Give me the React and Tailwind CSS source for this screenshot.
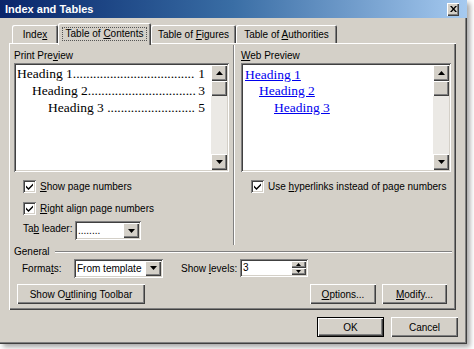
import React from 'react';

const raised =
  'bg-[#d4d0c8] shadow-[inset_1px_1px_#ffffff,inset_-1px_-1px_#404040,inset_-2px_-2px_#808080]';
const sunken =
  'shadow-[inset_1px_1px_#808080,inset_-1px_-1px_#ffffff,inset_2px_2px_#404040,inset_-2px_-2px_#d4d0c8]';
const tab =
  'flex h-[18px] items-center justify-center rounded-t-[2px] shadow-[inset_1px_1px_#ffffff,inset_-1px_0_#404040,inset_-2px_0_#808080]';

function Arrow({ up }) {
  return (
    <svg width="7" height="4" viewBox="0 0 7 4">
      <path d={up ? 'M3.5 0L7 4H0z' : 'M0 0h7L3.5 4z'} fill="#000" />
    </svg>
  );
}

function Scrollbar() {
  return (
    <div className="flex w-[16px] flex-col bg-[#ebe9e5]">
      <div className={`flex h-[16px] items-center justify-center ${raised}`}>
        <Arrow up />
      </div>
      <div className={`h-[15px] ${raised}`} />
      <div className="flex-1" />
      <div className={`flex h-[16px] items-center justify-center ${raised}`}>
        <Arrow />
      </div>
    </div>
  );
}

function Check({ children }) {
  return (
    <div className="flex h-[14px] items-center gap-[4px]">
      <div className={`flex h-[13px] w-[13px] items-center justify-center bg-white ${sunken}`}>
        <svg width="7" height="7" viewBox="0 0 7 7">
          <path d="M0 2.5l2.5 2.5L7 0.5v2L2.5 7 0 4.5z" fill="#000" />
        </svg>
      </div>
      <span className="whitespace-nowrap">{children}</span>
    </div>
  );
}

function Dropdown({ width, value }) {
  return (
    <div className={`flex h-[19px] bg-white p-[2px] ${sunken} ${width}`}>
      <div className="flex-1 whitespace-nowrap pl-[1px] leading-[15px] text-black">{value}</div>
      <div className={`flex w-[16px] items-center justify-center ${raised}`}>
        <Arrow />
      </div>
    </div>
  );
}

function Button({ width, children, bold }) {
  return (
    <div
      className={`flex h-[20px] items-center justify-center ${width} ${
        bold
          ? 'bg-[#d4d0c8] shadow-[inset_1px_1px_#000,inset_-1px_-1px_#000,inset_2px_2px_#ffffff,inset_-2px_-2px_#404040,inset_-3px_-3px_#808080]'
          : raised
      }`}
    >
      <span className="whitespace-nowrap">{children}</span>
    </div>
  );
}

// línea del índice con puntos de relleno
function TocLine({ indent, text, dots, page }) {
  return (
    <div className={`flex h-[17px] items-end justify-between pr-[6px] ${indent}`}>
      <span className="whitespace-nowrap">
        {text}
        {'.'.repeat(dots)}
      </span>
      <span>{page}</span>
    </div>
  );
}

export default function App() {
  return (
    <div className="h-[349px] w-[474px] overflow-hidden bg-white font-['Liberation_Sans',Arial,sans-serif] text-[10px] text-black">
      <div className="flex h-[344px] w-[467px] flex-col bg-[#d4d0c8] shadow-[inset_-1px_-1px_#404040,inset_-2px_-2px_#808080,3px_3px_5px_rgba(0,0,0,0.35)]">
        {/* barra de título */}
        <div className="flex h-[18px] items-center justify-between bg-gradient-to-r from-[#0a246a] via-[#3a6ea5] to-[#a6caf0] pl-[5px] pr-[8px]">
          <span className="text-[11px] font-bold text-white">Index and Tables</span>
          <div className={`flex h-[13px] w-[12px] items-center justify-center ${raised}`}>
            <svg width="7" height="6" viewBox="0 0 7 6">
              <path d="M0 0h1.8L3.5 2 5.2 0H7L4.4 3 7 6H5.2L3.5 4 1.8 6H0l2.6-3z" fill="#000" />
            </svg>
          </div>
        </div>

        <div className="flex flex-col px-[9px]">
          {/* pestañas */}
          <div className="flex h-[25px] items-end pl-[3px]">
            <div className={`${tab} w-[46px]`}>
              <span>
                Inde<u>x</u>
              </span>
            </div>
            <div className="relative z-10 -mb-[2px] flex h-[22px] w-[93px] items-center justify-center rounded-t-[2px] bg-[#d4d0c8] shadow-[inset_1px_1px_#ffffff,inset_-1px_0_#404040,inset_-2px_0_#808080]">
              <span className="border border-dotted border-[#555] px-[3px] leading-[12px]">
                Table of <u>C</u>ontents
              </span>
            </div>
            <div className={`${tab} w-[85px]`}>
              <span>
                Table of <u>F</u>igures
              </span>
            </div>
            <div className={`${tab} w-[101px]`}>
              <span>
                Table of <u>A</u>uthorities
              </span>
            </div>
          </div>

          {/* panel */}
          <div className={`flex h-[267px] w-[447px] flex-col ${raised}`}>
            <div className="flex h-[202px]">
              <div className="flex w-[224px] flex-col pl-[5px] pt-[7px]">
                <div className="h-[13px] leading-[12px]">
                  Print Pre<u>v</u>iew
                </div>
                <div className={`flex h-[109px] w-[215px] bg-white p-[2px] ${sunken}`}>
                  <div className="flex flex-1 flex-col font-['Liberation_Serif','Times_New_Roman',serif] text-[13.5px] leading-[17px]">
                    <TocLine indent="pl-[1px]" text="Heading 1" dots={36} page="1" />
                    <TocLine indent="pl-[16px]" text="Heading 2" dots={32} page="3" />
                    <TocLine indent="pl-[32px]" text="Heading 3 " dots={26} page="5" />
                  </div>
                  <Scrollbar />
                </div>
                <div className="flex flex-col pl-[9px] pt-[7px]">
                  <Check>
                    <u>S</u>how page numbers
                  </Check>
                  <div className="h-[8px]" />
                  <Check>
                    <u>R</u>ight align page numbers
                  </Check>
                  <div className="flex h-[25px] items-end">
                    <span className="w-[52px] whitespace-nowrap pb-[4px]">
                      Ta<u>b</u> leader:
                    </span>
                    <Dropdown width="w-[66px]" value="........" />
                  </div>
                </div>
              </div>

              <div className="mt-[2px] w-[2px] shadow-[inset_1px_0_#808080,inset_-1px_0_#ffffff]" />

              <div className="flex flex-1 flex-col pl-[6px] pt-[7px]">
                <div className="h-[13px] leading-[12px]">
                  <u>W</u>eb Preview
                </div>
                <div className={`flex h-[109px] w-[210px] bg-white p-[2px] ${sunken}`}>
                  <div className="flex flex-1 flex-col font-['Liberation_Serif','Times_New_Roman',serif] text-[13.5px] leading-[17px] text-[#0000ee]">
                    <div className="h-[17px] pl-[2px] pt-[1px]">
                      <span className="underline">Heading 1</span>
                    </div>
                    <div className="h-[17px] pl-[16px]">
                      <span className="underline">Heading 2</span>
                    </div>
                    <div className="h-[17px] pl-[31px]">
                      <span className="underline">Heading 3</span>
                    </div>
                  </div>
                  <Scrollbar />
                </div>
                <div className="pl-[10px] pt-[7px]">
                  <Check>
                    Use <u>h</u>yperlinks instead of page numbers
                  </Check>
                </div>
              </div>
            </div>

            {/* General */}
            <div className="flex h-[13px] items-center gap-[5px] pl-[5px] pr-[4px]">
              <span>General</span>
              <div className="h-[2px] flex-1 shadow-[inset_0_1px_#808080,inset_0_-1px_#ffffff]" />
            </div>
            <div className="flex h-[20px] items-center pl-[13px]">
              <span className="w-[52px] whitespace-nowrap">
                Forma<u>t</u>s:
              </span>
              <Dropdown width="w-[89px]" value="From template" />
              <span className="ml-[18px] w-[59px] whitespace-nowrap">
                Show <u>l</u>evels:
              </span>
              <div className={`flex h-[18px] w-[68px] bg-white p-[2px] ${sunken}`}>
                <div className="flex-1 pl-[1px] leading-[14px]">3</div>
                <div className="flex w-[15px] flex-col">
                  <div className={`flex flex-1 items-center justify-center ${raised}`}>
                    <svg width="5" height="3" viewBox="0 0 5 3">
                      <path d="M2.5 0L5 3H0z" fill="#000" />
                    </svg>
                  </div>
                  <div className={`flex flex-1 items-center justify-center ${raised}`}>
                    <svg width="5" height="3" viewBox="0 0 5 3">
                      <path d="M0 0h5L2.5 3z" fill="#000" />
                    </svg>
                  </div>
                </div>
              </div>
            </div>
            <div className="mt-[6px] flex items-center pl-[8px] pr-[9px]">
              <Button width="w-[128px]">
                Show O<u>u</u>tlining Toolbar
              </Button>
              <div className="flex-1" />
              <Button width="w-[66px]">
                <u>O</u>ptions...
              </Button>
              <div className="w-[6px]" />
              <Button width="w-[65px]">
                <u>M</u>odify...
              </Button>
            </div>
          </div>

          {/* botones inferiores */}
          <div className="mt-[7px] flex justify-end gap-[7px]">
            <Button width="w-[67px]" bold>
              OK
            </Button>
            <Button width="w-[67px]">Cancel</Button>
          </div>
        </div>
      </div>
    </div>
  );
}
